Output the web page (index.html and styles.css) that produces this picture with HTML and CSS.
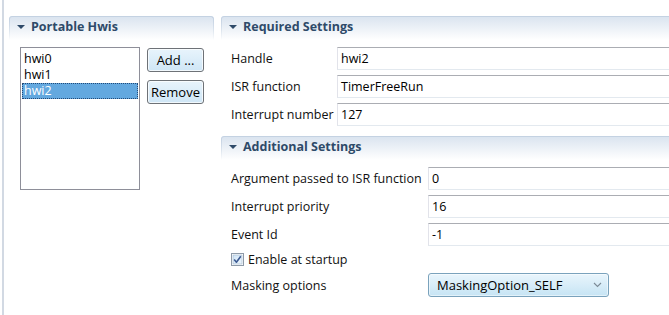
FILE: index.html
```html
<!DOCTYPE html>
<html>
<head>
<meta charset="utf-8">
<link rel="stylesheet" href="styles.css">
</head>
<body>
<div class="app">
  <div class="sash"></div>
  <aside class="left">
    <section class="section">
      <header class="sec-head"><span class="tri"></span><span class="title">Portable Hwis</span></header>
      <div class="left-body">
        <div class="list">
          <div class="item">hwi0</div>
          <div class="item">hwi1</div>
          <div class="item selected">hwi2</div>
        </div>
        <div class="btns">
          <button class="btn">Add ...</button>
          <button class="btn">Remove</button>
        </div>
      </div>
    </section>
  </aside>
  <main class="right">
    <section class="section">
      <header class="sec-head"><span class="tri"></span><span class="title">Required Settings</span></header>
      <div class="form form-req">
        <label class="lbl">Handle</label>
        <div class="field">hwi2</div>
        <label class="lbl">ISR function</label>
        <div class="field">TimerFreeRun</div>
        <label class="lbl">Interrupt number</label>
        <div class="field">127</div>
      </div>
    </section>
    <section class="section section-add">
      <header class="sec-head"><span class="tri"></span><span class="title">Additional Settings</span></header>
      <div class="form form-add">
        <label class="lbl">Argument passed to ISR function</label>
        <div class="field">0</div>
        <label class="lbl">Interrupt priority</label>
        <div class="field">16</div>
        <label class="lbl">Event Id</label>
        <div class="field">-1</div>
        <div class="check-row">
          <span class="checkbox">
            <svg width="13" height="13" viewBox="0 0 13 13">
              <defs>
                <linearGradient id="cbg" x1="0" y1="0" x2="1" y2="1">
                  <stop offset="0" stop-color="#cfe4f6"/>
                  <stop offset="1" stop-color="#eef6fc"/>
                </linearGradient>
              </defs>
              <rect x="0.5" y="0.5" width="12" height="12" fill="#fff" stroke="#8e9aa8"/>
              <rect x="2" y="2" width="9" height="9" fill="url(#cbg)" stroke="#9fb6cc" stroke-width="0.6"/>
              <path d="M3.2 6.6 L5.4 9.2 L9.8 3.2" fill="none" stroke="#3c5a92" stroke-width="1.6" stroke-linejoin="round"/>
            </svg>
          </span>
          <span class="check-label">Enable at startup</span>
        </div>
        <label class="lbl">Masking options</label>
        <div class="combo-cell">
          <div class="combo">
            <span>MaskingOption_SELF</span>
            <svg class="chev" width="9" height="6" viewBox="0 0 9 6"><path d="M1 1 L4.5 4.5 L8 1" fill="none" stroke="#7c8a96" stroke-width="1.1"/></svg>
          </div>
        </div>
      </div>
    </section>
  </main>
</div>
</body>
</html>
```
FILE: styles.css
```css
* { box-sizing: border-box; }
html, body {
  margin: 0;
  padding: 0;
  background: #fff;
}
body {
  font-family: "Open Sans", "Noto Sans", sans-serif;
  font-size: 12.5px;
  color: #111;
}
.app {
  display: flex;
  width: 669px;
  height: 315px;
  overflow: hidden;
  background: #fff;
}
.sash {
  flex: none;
  width: 2px;
  margin-left: 2px;
  background: #d2d9e3;
}
.left {
  flex: none;
  width: 217px;
  padding: 16px 7px 0 5px;
}
.right {
  flex: none;
  width: 480px;
  padding-top: 16px;
}
.sec-head {
  position: relative;
  height: 24px;
  display: flex;
  align-items: center;
  padding: 0 0 3px 8px;
  border-radius: 3px 3px 0 0;
  background: linear-gradient(#d9e3ef, #ffffff);
  font-weight: bold;
  font-size: 12.5px;
  color: #2e4a69;
}
.sec-head::before {
  content: "";
  position: absolute;
  inset: 0;
  border: 1px solid #c3d1e1;
  border-bottom: 0;
  border-radius: 3px 3px 0 0;
  -webkit-mask-image: linear-gradient(#000, rgba(0,0,0,0));
  mask-image: linear-gradient(#000, rgba(0,0,0,0));
}
.tri {
  width: 0;
  height: 0;
  border-left: 4px solid transparent;
  border-right: 4px solid transparent;
  border-top: 4px solid #2e4a69;
  margin-right: 6px;
}
.left-body {
  display: flex;
  gap: 7px;
  margin-top: 7px;
  padding-left: 11px;
}
.list {
  width: 120px;
  height: 143px;
  border: 1px solid #8e8f99;
  padding: 3px 1px;
}
.item {
  height: 16px;
  line-height: 16px;
  padding-left: 2px;
  color: #000;
}
.item.selected {
  background: #63a8df;
  color: #fff;
  outline: 1px dotted #234a78;
  outline-offset: -1px;
}
.btns {
  display: flex;
  flex-direction: column;
  gap: 8px;
  padding-top: 1px;
}
.btn {
  width: 57px;
  height: 24px;
  padding: 0;
  font-family: inherit;
  font-size: 13px;
  color: #000;
  border: 1px solid #6e7277;
  border-radius: 3px;
  background: linear-gradient(#e8f4fc, #cfe6f6);
  box-shadow: inset 0 0 0 1px rgba(255,255,255,0.7);
}
.form {
  display: grid;
  row-gap: 5px;
  column-gap: 6px;
  padding-left: 10px;
  margin-top: 7px;
  align-items: center;
}
.form-req {
  grid-template-columns: 100px 1fr;
  margin-bottom: 10px;
}
.form-add {
  grid-template-columns: 191px 1fr;
}
.lbl {
  white-space: nowrap;
  color: #111;
}
.field {
  height: 23px;
  line-height: 21px;
  padding-left: 3px;
  border: 1px solid #e2e3ea;
  border-top-color: #abadb3;
  border-bottom-color: #e3e9ef;
  background: #fff;
  color: #000;
}
.check-row {
  grid-column: 1 / -1;
  height: 17px;
  display: flex;
  align-items: center;
  gap: 4px;
}
.checkbox {
  display: flex;
  width: 13px;
  height: 13px;
}
.combo-cell {
  display: flex;
}
.combo {
  width: 181px;
  height: 24px;
  display: flex;
  align-items: center;
  justify-content: space-between;
  padding: 0 6px 0 8px;
  border: 1px solid #7aa2bc;
  border-radius: 3px;
  background: linear-gradient(#e9f5fc, #c6e4f4);
  box-shadow: inset 0 0 0 1px rgba(255,255,255,0.5);
  color: #000;
  font-size: 13px;
}
.chev {
  display: block;
}
```
